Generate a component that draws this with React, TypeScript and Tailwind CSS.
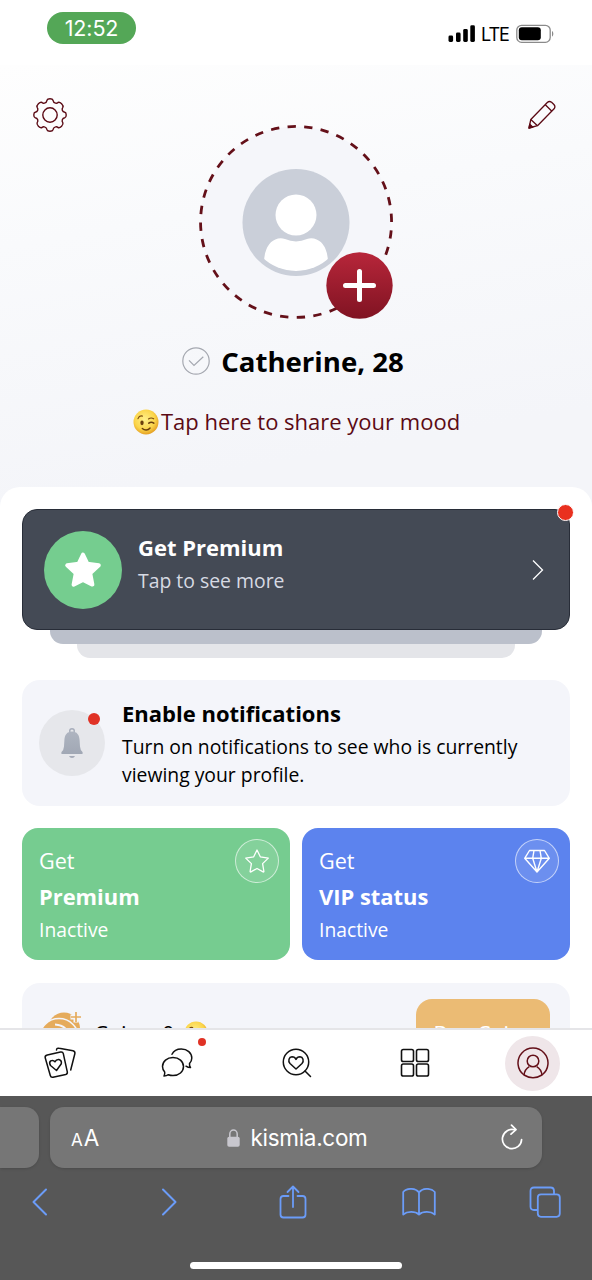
import React from 'react';

const WinkEmoji = ({ className }: { className: string }) => (
  <svg viewBox="0 0 26 26" className={className} fill="none">
    <defs>
      <radialGradient id="wink" cx="0.45" cy="0.4" r="0.62">
        <stop offset="0" stopColor="#fff08a" />
        <stop offset="0.65" stopColor="#fbd54a" />
        <stop offset="1" stopColor="#e29a1f" />
      </radialGradient>
    </defs>
    <circle cx="13" cy="13" r="12.5" fill="url(#wink)" />
    <ellipse cx="9" cy="13.8" rx="1.7" ry="2.4" fill="#6b3f0c" />
    <path d="M5 9.6c.8-2 2.6-3 4.4-2.5" stroke="#7a4a10" strokeWidth="1.2" strokeLinecap="round" />
    <path d="M15.5 10c1.6-1.2 3.6-1.2 5.2-.2" stroke="#7a4a10" strokeWidth="1.1" strokeLinecap="round" />
    <path d="M15.8 14.2c1.6-1.3 3.5-1.2 5 0" stroke="#6b3f0c" strokeWidth="1.5" strokeLinecap="round" />
    <path d="M9.3 19.4c2.2 2.2 5.6 2.2 7.8-.4" stroke="#6b3f0c" strokeWidth="1.4" strokeLinecap="round" />
  </svg>
);

const StatusBar = () => (
  <header className="flex h-[65px] shrink-0 justify-between bg-white pl-[47px] pr-[38px] pt-3">
    <div className="flex h-8 w-[89px] items-center justify-center rounded-full bg-[#54a757] pt-px font-['Inter',sans-serif] text-[21.5px] tracking-[-0.1px] text-white">
      12:52
    </div>
    <div className="mt-[11px] flex h-[21px] items-center">
      <svg viewBox="0 0 28 18" className="h-[18px] w-7" fill="#000">
        <rect x="0.5" y="10.5" width="4.6" height="6.5" rx="1.4" />
        <rect x="8" y="7.5" width="4.6" height="9.5" rx="1.4" />
        <rect x="15.2" y="4" width="4.6" height="13" rx="1.4" />
        <rect x="22.3" y="0.3" width="4.6" height="16.7" rx="1.4" />
      </svg>
      <span className="ml-[5px] w-7 whitespace-nowrap pt-0.5 font-['Inter',sans-serif] text-[18px] tracking-[-1px]">LTE</span>
      <svg viewBox="0 0 38 20" className="ml-[7px] h-5 w-[38px]" fill="none">
        <rect x="0.8" y="1.3" width="33.4" height="17" rx="4.8" stroke="#8a8a8a" strokeWidth="1.3" />
        <rect x="2.8" y="3.3" width="22" height="13" rx="3" fill="#000" />
        <path d="M36 7v5.6c1.8-.8 1.8-4.8 0-5.6z" fill="#8a8a8a" />
      </svg>
    </div>
  </header>
);

const Gear = () => (
  <svg viewBox="0 0 34 34" className="size-[34px]" fill="none" stroke="#5b0a14" strokeWidth="1.4" strokeLinejoin="round">
    <circle cx="17" cy="17" r="7.2" />
    <path d="M14 2.300Q14.400 .8 17 .8t3 1.500Q20.400 4.600 22.500 5.100 24 5.500 25 4.500q1.600-.7 3.600 1.300t1.200 3.500q-1 1.400-.5 3 .6 1.800 2.500 2 1.400.3 1.400 2.700t-1.400 2.700q-1.900.2-2.500 2-.5 1.600.5 3 .8 1.500-1.200 3.500t-3.600 1.300q-1-1-2.500-.6-2.100.5-2.500 2.800-.4 1.500-3 1.500t-3-1.500q-.4-2.300-2.500-2.800-1.500-.4-2.500.6-1.600.7-3.600-1.300t-1.200-3.500q1-1.400.5-3-.6-1.800-2.500-2Q.8 19.400.8 17t1.400-2.700q1.900-.2 2.500-2 .5-1.600-.5-3Q3.400 7.800 5.400 5.800T9 4.500q1 1 2.500.6Q13.600 4.600 14 2.300z" />
  </svg>
);

const Pencil = () => (
  <svg viewBox="0 0 30 30" className="size-[30px]" fill="none" stroke="#5b0a14" strokeWidth="1.3" strokeLinejoin="round">
    <path d="M2 28l1.800-8.500L20.300 2.500q2-1.900 4.300-.2l2.300 2.200q1.900 2.200.2 4.300L10.500 25.700z" />
    <path d="M18.300 4.800l6.600 6.500M3.800 19.500l6.700 6.200" />
    <path d="M2 28l.8-3.800 3 2.900z" fill="#5b0a14" />
  </svg>
);

const Avatar = () => (
  <svg viewBox="0 0 200 200" className="size-[200px]" fill="none">
    <defs>
      <linearGradient id="plus" x1="0" y1="0" x2="0" y2="1">
        <stop offset="0" stopColor="#b7263a" />
        <stop offset="1" stopColor="#801322" />
      </linearGradient>
      <clipPath id="face">
        <circle cx="100" cy="100.5" r="48.5" />
      </clipPath>
    </defs>
    <circle cx="100" cy="100" r="95.5" fill="#f5f6fa" />
    {/* the dashes leave an opening above the plus button */}
    <path d="M144.800 184.300A95.500 95.500 0 1 1 189.200 134.200" stroke="#641019" strokeWidth="2.8" pathLength="318.500" strokeDasharray="5 5" strokeDashoffset="-2.500" />
    <circle cx="100" cy="100.5" r="53.5" fill="#cacfd9" />
    <circle cx="100" cy="93" r="20.5" fill="#fff" />
    <path clipPath="url(#face)" d="M68 139.500Q69 120 82 116.500q4-.8 7 .6 11 4.800 22 0 3-1.400 7-.6 13 3.500 14 23Q122 149 100 149T68 139.500z" fill="#fff" />
    <circle cx="163.5" cy="163.5" r="33.2" fill="url(#plus)" />
    <path d="M163.500 149.500v28M149.500 163.500h28" stroke="#fff" strokeWidth="5" strokeLinecap="round" />
  </svg>
);

const ProfileHeader = () => (
  <section className="flex h-[422px] flex-col items-center">
    <div className="flex w-full justify-between pl-[33px] pr-[35px]">
      <div className="mt-[33px]"><Gear /></div>
      <div className="mr-[3px] mt-[57px]"><Avatar /></div>
      <div className="mt-[35px]"><Pencil /></div>
    </div>
    <div className="mt-[21px] flex h-9 items-center gap-[11px] pr-1.5">
      <svg viewBox="0 0 28 28" className="size-7" fill="none" stroke="#a5a8b0" strokeWidth="1.2">
        <circle cx="14" cy="14" r="13.2" />
        <path d="M7 13.300l5 5.200 9.300-8.800" />
      </svg>
      <h1 className="whitespace-nowrap text-[27.6px] font-bold leading-9">Catherine, 28</h1>
    </div>
    <div className="mt-[26px] flex h-[34px] items-center pl-px">
      <WinkEmoji className="mr-0.5 size-[26px]" />
      <span className="whitespace-nowrap pb-0.5 text-[22px] text-[#5b0a14]">Tap here to share your mood</span>
    </div>
  </section>
);

const PremiumBanner = () => (
  <div className="flex flex-col items-center">
    <div className="relative z-10 flex h-[121px] w-full items-center rounded-[15px] border border-[#282d38] bg-[#444a55] pl-[21px] pr-[25px]">
      <div className="flex size-[78px] items-center justify-center rounded-full bg-[#75cd8f]">
        <svg viewBox="0 0 38 38" className="size-[38px]" fill="#fff" stroke="#fff" strokeWidth="4" strokeLinejoin="round">
          <path d="M19 3.500l4.300 9.200 11.500 1.600-8.600 7.900 2.200 11.400L19 29l-9.400 4.600 2.200-11.400-8.600-7.900 11.500-1.600z" />
        </svg>
      </div>
      <div className="ml-4 flex-1 pb-[11px]">
        <p className="text-[22px] font-bold leading-[34px] text-white">Get Premium</p>
        <p className="text-[19.4px] leading-[34px] text-[#d7dae3]">Tap to see more</p>
      </div>
      <svg viewBox="0 0 12 22" className="h-[22px] w-3" fill="none" stroke="#fff" strokeWidth="1.3">
        <path d="M1 1.500l9.500 9.500L1 20.500" />
      </svg>
      <span className="absolute -right-[5px] -top-[6px] size-[17px] rounded-full border-[1.5px] border-white bg-[#e9301f]" />
    </div>
    <div className="h-3.5 w-[492px] rounded-b-[13px] bg-[#bbc0cb]" />
    <div className="h-3.5 w-[438px] rounded-b-[13px] bg-[#e4e5e9]" />
  </div>
);

const Bell = () => (
  <svg viewBox="0 0 24 32" className="h-8 w-6" fill="none">
    <defs>
      <linearGradient id="bell" x1="0" y1="0" x2="0" y2="1">
        <stop offset="0" stopColor="#aeb4c0" />
        <stop offset="1" stopColor="#a1a8b5" />
      </linearGradient>
    </defs>
    <circle cx="12" cy="4" r="2.3" stroke="#a8aebb" strokeWidth="1.4" />
    <path d="M12 4.500c-5 0-7.300 3.500-7.600 8.500L4 19.500q-.3 3.700-2.500 5.500-.8 2 .5 2h20q1.300 0 .5-2-2.200-1.800-2.500-5.500l-.4-6.500c-.3-5-2.600-8.500-7.600-8.500z" fill="url(#bell)" />
    <path d="M9 29h6q-.8 2-3 2t-3-2z" fill="#a5abb8" />
  </svg>
);

const NotificationsCard = () => (
  <div className="mt-[22px] flex h-[126px] items-center rounded-[18px] bg-[#f4f5fa] pl-[17px]">
    <div className="relative flex size-[66px] items-center justify-center rounded-full bg-[#e6e7eb]">
      <Bell />
      <span className="absolute right-[5px] top-[3px] size-3 rounded-full bg-[#e03225]" />
    </div>
    <div className="ml-[17px] pb-px">
      <p className="mb-[3px] text-[22px] font-bold leading-[34px]">Enable notifications</p>
      <p className="whitespace-nowrap text-[19.35px] leading-[28px]">
        Turn on notifications to see who is currently
        <br />
        viewing your profile.
      </p>
    </div>
  </div>
);

const StarOutline = () => (
  <svg viewBox="0 0 26 26" className="size-[26px]" fill="none" stroke="#fff" strokeWidth="1.3" strokeLinejoin="round">
    <path d="M13 2l3.300 6.800 8 1.300-5.700 5.500 1.300 7.900q-.2.700-.8.400L13 20.500l-6.100 3.400q-.6.300-.8-.4l1.300-7.900-5.700-5.500 8-1.300z" />
  </svg>
);

const Diamond = () => (
  <svg viewBox="0 0 26 26" className="size-[26px]" fill="none" stroke="#fff" strokeWidth="1.4" strokeLinejoin="round">
    <path d="M5.500 2.500h15l4.800 7.800L13 24 .7 10.300zM.7 10.300h24.600M10 2.500l-1.300 7.800L13 24l4.300-13.700L16 2.500" />
  </svg>
);

const plans = [
  { title: 'Premium', color: 'bg-[#76cc90]', icon: <StarOutline /> },
  { title: 'VIP status', color: 'bg-[#5c83ee]', icon: <Diamond /> },
];

const PlanCards = () => (
  <div className="mt-[22px] flex gap-3">
    {plans.map((plan) => (
      <div key={plan.title} className={`flex h-[132px] flex-1 justify-between rounded-[16px] pl-[17px] pr-[11px] pt-[11px] text-white ${plan.color}`}>
        <div className="pt-1">
          <p className="text-[21.6px] leading-9">Get</p>
          <p className="text-[21.9px] font-bold leading-9">{plan.title}</p>
          <p className="text-[19.3px] leading-[30px]">Inactive</p>
        </div>
        <div className="flex size-11 items-center justify-center rounded-full border border-white/60 bg-white/10">
          {plan.icon}
        </div>
      </div>
    ))}
  </div>
);

const CoinsCard = () => (
  <div className="mt-[23px] flex h-[104px] items-start rounded-[18px] bg-[#f4f5fa] pl-[18px] pr-5">
    <svg viewBox="0 0 44 44" className="mt-[28px] size-11" fill="none">
      <circle cx="24" cy="17.5" r="16" fill="#e5ab5c" />
      <circle cx="19" cy="27" r="19.5" fill="#e5ab5c" stroke="#f4f5fa" strokeWidth="1.6" />
      <path d="M15 13.500Q27 14 31 27" stroke="#f4f5fa" strokeWidth="1.8" />
      <path d="M36 .5v11M30.500 6h11" stroke="#f4f5fa" strokeWidth="5" />
      <path d="M36 1v10M31 6h10" stroke="#e5ab5c" strokeWidth="1.7" />
    </svg>
    <div className="ml-[10px] mt-[34px] flex h-8 items-center">
      <span className="w-[90px] whitespace-nowrap text-[22px]">Coins: 0</span>
      <WinkEmoji className="mb-px size-6" />
    </div>
    <div className="ml-auto mt-4 flex h-[70px] w-[134px] items-center justify-center whitespace-nowrap rounded-[16px] bg-[#ebbb74] text-[21.5px] text-white">
      Buy Coins
    </div>
  </div>
);

const TabBar = () => (
  <nav className="flex h-[68px] shrink-0 items-center justify-between border-t-2 border-[#e5e5e8] bg-white pl-[43px] pr-8">
    <svg viewBox="0 0 34 34" className="size-[34px]" fill="none" stroke="#111" strokeWidth="1.5" strokeLinecap="round" strokeLinejoin="round">
      <path d="M4.300 9L17.500 6q2.300-.5 2.800 1.600l4 18.300q.4 2-1.600 2.500L10 31.200q-2.200.4-2.700-1.700L2.200 11.800Q1.700 9.600 4.300 9z" />
      <path d="M13.500 4q.3-2.200 2.700-1.700L30 4.800q2.200.6 1.900 2.700L27.700 24" />
      <path d="M13.500 24.500l-6-5q-1.800-3 .2-4.600 2.600-1.200 4.200.9 1.300-2.500 3.900-2.300 3.200 1 2.500 4.200z" />
    </svg>
    <div className="relative ml-[7px] mr-1">
      <svg viewBox="0 0 34 34" className="size-[34px]" fill="none" stroke="#111" strokeWidth="1.5" strokeLinecap="round" strokeLinejoin="round">
        <path d="M13 11.500c-6 0-10.500 3.900-10.500 9 0 2 .8 4 2.200 5.600q.3 1.900-.7 3.900 2.500 0 4.400-1.300 2 .9 4.600.9c6 0 10.500-3.900 10.500-9s-4.500-9.100-10.500-9.100z" />
        <path d="M12 8.200C13.500 5 17 3 21.300 3c6 0 10.500 4 10.500 9 0 2.200-.8 4-2.300 5.600q-.2 2 1 4-2.500 0-4.500-1.400" />
      </svg>
      <span className="absolute -right-[12px] -top-[8px] size-2 rounded-full bg-[#e03225]" />
    </div>
    <svg viewBox="0 0 34 34" className="ml-[7px] size-[34px]" fill="none" stroke="#111" strokeWidth="1.5" strokeLinecap="round" strokeLinejoin="round">
      <circle cx="16" cy="16" r="12.7" />
      <path d="M25 25l5.500 5.500M16 23l-6-5.500c-2.300-2.500-1-6.500 2-6.700 2 0 3.300.9 4 2.600.7-1.700 2-2.600 4-2.600 3 .2 4.300 4.200 2 6.700z" />
    </svg>
    <svg viewBox="0 0 30 30" className="ml-[10px] size-[30px]" fill="none" stroke="#111" strokeWidth="1.6">
      <rect x="1.5" y="1.5" width="12" height="12" rx="1.8" />
      <rect x="16.5" y="1.5" width="12" height="12" rx="1.8" />
      <rect x="1.5" y="16" width="12" height="12" rx="1.8" />
      <rect x="16.5" y="16" width="12" height="12" rx="1.8" />
    </svg>
    <div className="flex size-[55px] items-center justify-center rounded-full bg-[#efe6e9]">
      <svg viewBox="0 0 32 32" className="size-8" fill="none" stroke="#641019" strokeWidth="1.5">
        <path d="M7 28a15 15 0 1 1 18 0" />
        <circle cx="16" cy="14" r="5.8" />
        <path d="M7 28.200c.4-4.200 2.500-7 5.300-8.600M25 28.200c-.4-4.200-2.500-7-5.300-8.600M7 28q9 5.500 18 0" />
      </svg>
    </div>
  </nav>
);

const BrowserBar = () => (
  <footer className="h-[184px] shrink-0 bg-[#575757] pt-[11px] font-['Inter',sans-serif] text-white">
    <div className="flex h-[61px] gap-[11px]">
      <div className="w-[39px] rounded-r-[14px] bg-[#767676] shadow" />
      <div className="flex w-[492px] items-center justify-between rounded-[14px] bg-[#767676] pl-[21px] pr-[19px] shadow">
        <div className="flex w-7 items-baseline gap-px">
          <span className="text-[17px]">A</span>
          <span className="text-[22.5px]">A</span>
        </div>
        <div className="flex items-center gap-[10px] pr-[5px]">
          <svg viewBox="0 0 13 18" className="h-[18px] w-[13px]" fill="none">
            <path d="M2.800 8.500V5a3.700 4 0 0 1 7.400 0v3.500" stroke="#c8c7ce" strokeWidth="1.5" />
            <rect x="0.3" y="7.8" width="12.4" height="10" rx="1.8" fill="#c8c7ce" />
          </svg>
          <span className="pt-px text-[22.5px] tracking-[-0.3px]">kismia.com</span>
        </div>
        <svg viewBox="0 0 22 26" className="mb-[2px] h-[26px] w-[22px]" fill="none" stroke="#fff" strokeWidth="1.7" strokeLinecap="round" strokeLinejoin="round">
          <path d="M13.500 5.800A9.600 9.600 0 1 0 20.600 15.500" />
          <path d="M10.500 1.200l4.500 4.500-5 4.500" />
        </svg>
      </div>
    </div>
    <div className="mt-[17px] flex h-[34px] items-center justify-between pl-6 pr-[30px] text-[#6b9cf8]">
      <div className="w-[34px] pl-2">
        <svg viewBox="0 0 16 28" className="h-7 w-4" fill="none" stroke="currentColor" strokeWidth="2" strokeLinecap="round" strokeLinejoin="round">
          <path d="M14 1.500L1.500 14 14 26.500" />
        </svg>
      </div>
      <div className="w-[34px] pl-[11px]">
        <svg viewBox="0 0 16 28" className="h-7 w-4" fill="none" stroke="currentColor" strokeWidth="2" strokeLinecap="round" strokeLinejoin="round">
          <path d="M2 1.500L14.500 14 2 26.500" />
        </svg>
      </div>
      <div className="w-[34px] pl-[3px]">
        <svg viewBox="0 0 28 34" className="h-[34px] w-7" fill="none" stroke="currentColor" strokeWidth="1.8" strokeLinecap="round" strokeLinejoin="round">
          <path d="M9.500 11H4.500Q1.500 11 1.500 14v15.500q0 3 3 3h19q3 0 3-3V14q0-3-3-3h-5M14 22V1.800M8.500 7L14 1.500 19.500 7" />
        </svg>
      </div>
      <svg viewBox="0 0 34 28" className="h-7 w-[34px]" fill="none" stroke="currentColor" strokeWidth="1.8" strokeLinejoin="round">
        <path d="M17 26.500V4.500C13.500-.2 5-.3 1.200 4v22.500c4-3.300 11.800-3.500 15.800 0 4-3.500 11.800-3.300 15.800 0V4C29-.3 20.500-.2 17 4.500" />
      </svg>
      <div className="w-[34px] pl-px">
        <svg viewBox="0 0 32 32" className="size-8" fill="none" stroke="currentColor" strokeWidth="1.8">
          <path d="M8.500 24H5q-3.500 0-3.500-3.500V5Q1.500 1.500 5 1.500h16.500Q25 1.500 25 5v3" />
          <rect x="8.8" y="8.3" width="22" height="22.5" rx="3.2" />
        </svg>
      </div>
    </div>
    <div className="mx-auto mt-[43px] h-[7px] w-[212px] rounded-full bg-white" />
  </footer>
);

const App = () => (
  <div className="flex h-[1280px] w-[592px] flex-col overflow-hidden bg-white font-['Open_Sans',sans-serif] text-black">
    <StatusBar />
    <main className="h-[963px] shrink-0 overflow-hidden bg-[linear-gradient(170deg,#fefefe_0px,#f9fafc_180px,#f4f5f9_440px)]">
      <ProfileHeader />
      <section className="rounded-t-[20px] bg-white px-[22px] pt-[22px]">
        <PremiumBanner />
        <NotificationsCard />
        <PlanCards />
        <CoinsCard />
      </section>
    </main>
    <TabBar />
    <BrowserBar />
  </div>
);

export default App;
